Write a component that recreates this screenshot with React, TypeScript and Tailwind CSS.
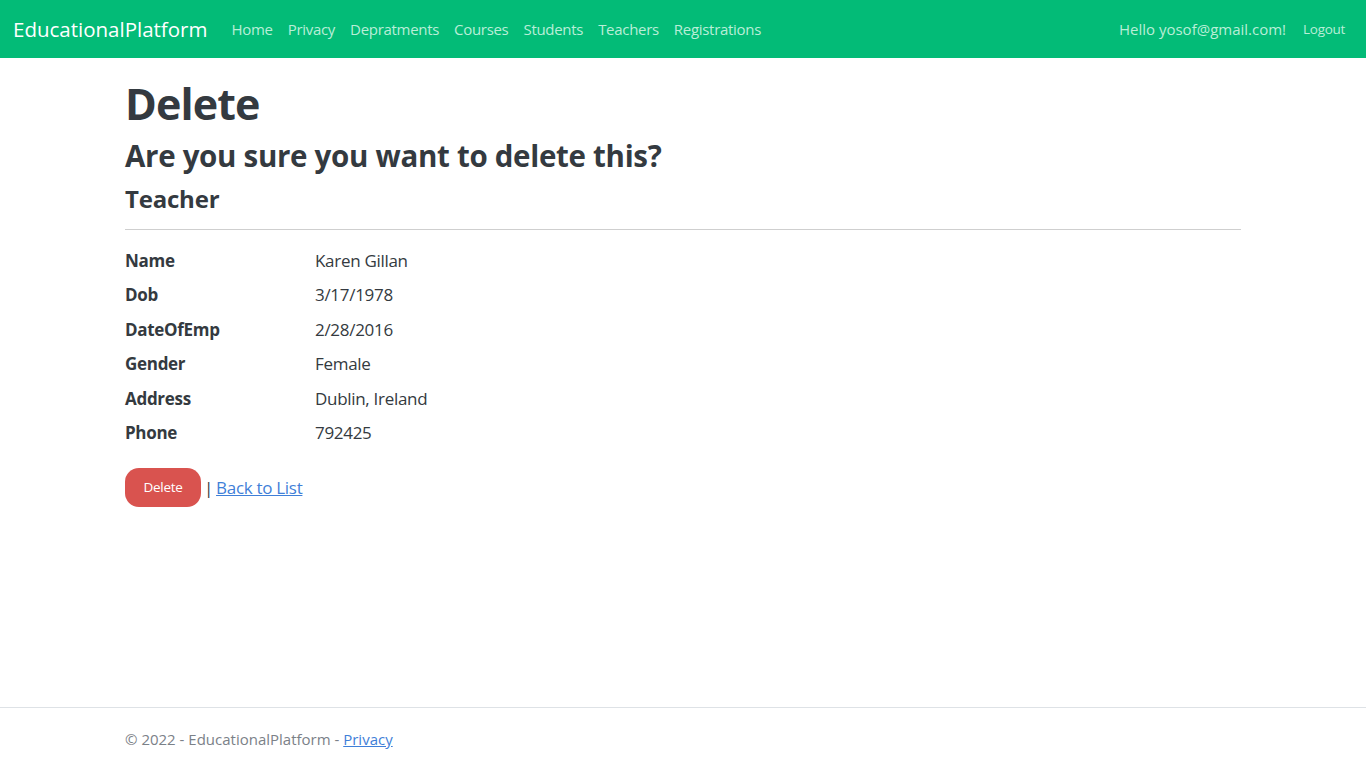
const NAV_LINKS = ["Home", "Privacy", "Depratments", "Courses", "Students", "Teachers", "Registrations"];

const DETAILS = [
  { label: "Name", value: "Karen Gillan" },
  { label: "Dob", value: "3/17/1978" },
  { label: "DateOfEmp", value: "2/28/2016" },
  { label: "Gender", value: "Female" },
  { label: "Address", value: "Dublin, Ireland" },
  { label: "Phone", value: "792425" },
];

export default function App() {
  return (
    <div className="min-h-[768px] flex flex-col bg-white text-[#343a40] font-['Open_Sans',sans-serif]">
      <nav className="h-[58px] bg-[#03bb77] flex items-center pl-[13px] pr-[21px]">
        <a className="text-[20.5px] text-white">EducationalPlatform</a>
        <ul className="flex items-center gap-[15px] ml-[24px] text-[15px] text-[#b9eed7] tracking-[-0.3px]">
          {NAV_LINKS.map((l) => (
            <li key={l}>{l}</li>
          ))}
        </ul>
        <div className="ml-auto flex items-center gap-[17px]">
          <span className="text-[15px] text-[#b9eed7]">Hello yosof@gmail.com!</span>
          <span className="text-[13.5px] text-[#b9eed7] tracking-[-0.3px]">Logout</span>
        </div>
      </nav>

      <main className="flex-1 w-[1116px] ml-[125px]">
        <h1 className="mt-[20px] text-[43px] leading-[52px] font-bold tracking-[-0.9px]">Delete</h1>
        <h2 className="mt-[6px] text-[29.5px] leading-[40px] font-bold tracking-[-0.3px]">Are you sure you want to delete this?</h2>
        <h4 className="mt-[6px] text-[24px] leading-[34px] font-bold tracking-[-0.2px]">Teacher</h4>
        <hr className="mt-[13px] border-t border-[#cfcfcf]" />
        <dl className="mt-[19px] grid grid-cols-[190px_1fr] gap-y-[10.4px] text-[17px] leading-[24px] tracking-[-0.3px]">
          {DETAILS.map((d) => (
            <div key={d.label} className="contents">
              <dt className="font-bold">{d.label}</dt>
              <dd>{d.value}</dd>
            </div>
          ))}
        </dl>
        <div className="mt-[23px] flex items-center gap-[3px] text-[17px] tracking-[-0.3px]">
          <button className="w-[76px] h-[39px] rounded-[14px] bg-[#d9534f] text-white text-[13.5px]">Delete</button>
          <span className="text-[#343a40]">|</span>
          <a className="text-[#3f7fd8] underline">Back to List</a>
        </div>
      </main>

      <footer className="h-[61px] border-t border-[#dee2e6] flex items-center">
        <div className="ml-[125px] pt-[2px] text-[15px] text-[#7b8188]">
          © 2022 - EducationalPlatform - <a className="text-[#3f7fd8] underline">Privacy</a>
        </div>
      </footer>
    </div>
  );
}
